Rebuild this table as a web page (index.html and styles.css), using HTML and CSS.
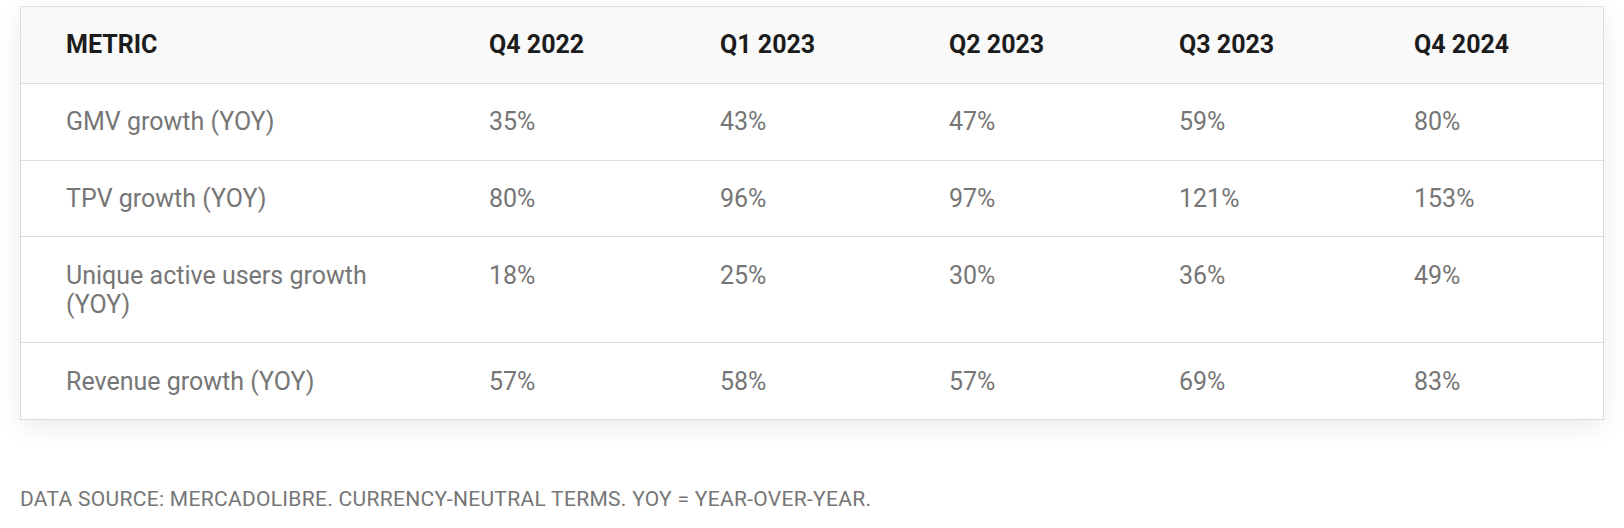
FILE: index.html
```html
<!DOCTYPE html>
<html lang="en">
<head>
<meta charset="utf-8">
<title>Metrics</title>
<link rel="stylesheet" href="styles.css">
</head>
<body>
<div class="page">
  <div class="card">
    <table class="metrics">
      <thead>
        <tr>
          <th class="c1">METRIC</th>
          <th class="c2">Q4 2022</th>
          <th class="c3">Q1 2023</th>
          <th class="c4">Q2 2023</th>
          <th class="c5">Q3 2023</th>
          <th class="c6">Q4 2024</th>
        </tr>
      </thead>
      <tbody>
        <tr><td>GMV growth (YOY)</td><td>35%</td><td>43%</td><td>47%</td><td>59%</td><td>80%</td></tr>
        <tr><td>TPV growth (YOY)</td><td>80%</td><td>96%</td><td>97%</td><td>121%</td><td>153%</td></tr>
        <tr><td>Unique active users growth (YOY)</td><td>18%</td><td>25%</td><td>30%</td><td>36%</td><td>49%</td></tr>
        <tr><td>Revenue growth (YOY)</td><td>57%</td><td>58%</td><td>57%</td><td>69%</td><td>83%</td></tr>
      </tbody>
    </table>
  </div>
  <p class="source">DATA SOURCE: MERCADOLIBRE. CURRENCY-NEUTRAL TERMS. YOY = YEAR-OVER-YEAR.</p>
</div>
</body>
</html>
```

FILE: styles.css
```css
html, body {
  margin: 0;
  padding: 0;
  background: #ffffff;
}

.page {
  padding: 6px 20px 0 20px;
  font-family: Roboto, "Liberation Sans", sans-serif;
}

.card {
  border: 1px solid #dddddd;
  background: #ffffff;
  box-shadow: 0 8px 24px rgba(0, 0, 0, 0.08);
}

.metrics {
  width: 100%;
  border-collapse: collapse;
  table-layout: fixed;
}

.metrics th,
.metrics td {
  box-sizing: border-box;
  text-align: left;
  vertical-align: top;
  padding: 23.4px 45px;
  font-size: 25px;
  line-height: 29px;
}

.metrics th {
  background: #f9f9f9;
  color: #1c1c1c;
  font-weight: 700;
  border-bottom: 1px solid #dddddd;
}

.metrics td {
  color: #767676;
  font-weight: 400;
  border-bottom: 1px solid #dddddd;
}

.metrics tbody tr:last-child td {
  border-bottom: none;
}

.c1 { width: 423px; }
.c2 { width: 231px; }
.c3 { width: 229px; }
.c4 { width: 230px; }
.c5 { width: 235px; }
.c6 { width: auto; }

.source {
  margin: 67px 0 0 0;
  font-size: 21px;
  letter-spacing: 0.3px;
  line-height: 1.2;
  color: #767676;
}
```
